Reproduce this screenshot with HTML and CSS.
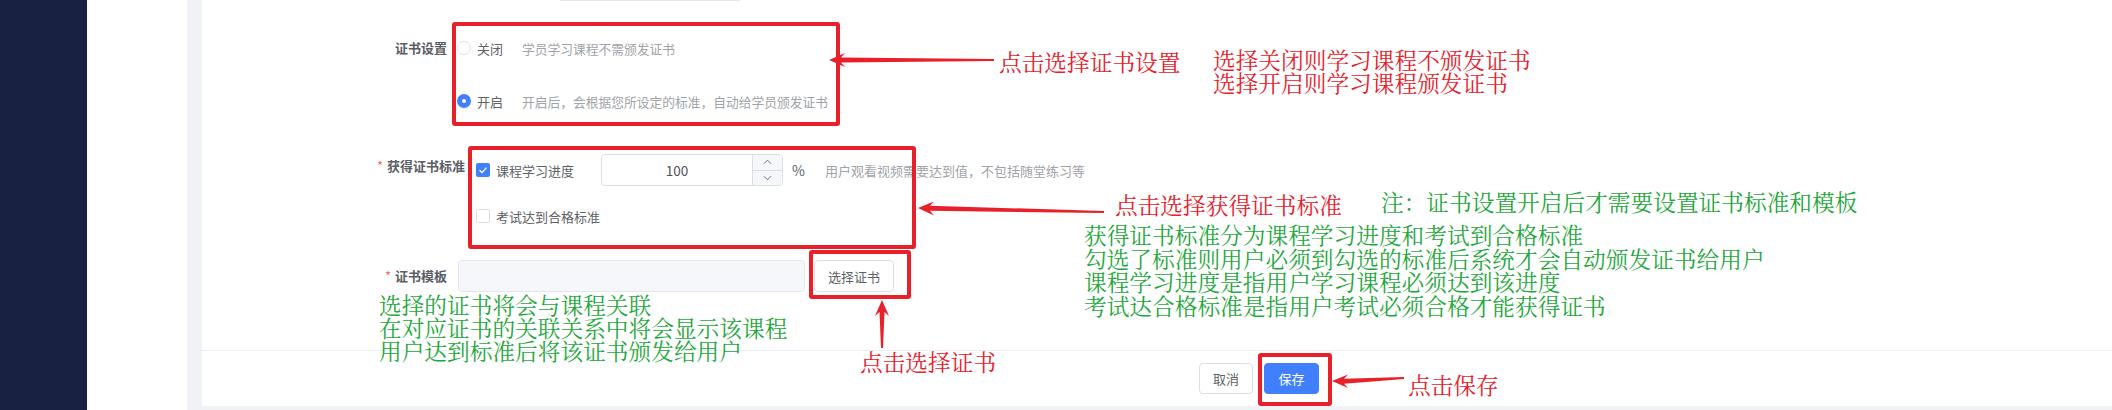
FILE: index.html
```html
<!DOCTYPE html>
<html lang="zh-CN">
<head>
    <meta charset="UTF-8">
    <title>证书设置</title>
    <link rel="stylesheet" href="styles.css">
</head>
<body>

<div class="layout">
    <aside class="sidebar"></aside>
    <div class="side-space"></div>

    <main class="main">
        <div class="card">
            <div class="card-body">
                <div class="prev-field"></div>

                <!-- 证书设置 -->
                <div class="form-item item-setting">
                    <label class="form-label">证书设置</label>
                    <div class="radio-group">
                        <div class="radio">
                            <span class="radio-dot"></span>
                            <span class="radio-text">关闭</span>
                            <span class="radio-desc">学员学习课程不需颁发证书</span>
                        </div>
                        <div class="radio">
                            <span class="radio-dot checked"></span>
                            <span class="radio-text">开启</span>
                            <span class="radio-desc">开启后，会根据您所设定的标准，自动给学员颁发证书</span>
                        </div>
                    </div>
                </div>

                <!-- 获得证书标准 -->
                <div class="form-item item-standard">
                    <label class="form-label wide"><span class="required">*</span>获得证书标准</label>
                    <div class="check-group">
                        <div class="check-row">
                            <span class="checkbox checked">
                                <svg viewBox="0 0 14 14" width="14" height="14"><path d="M3.5 7.2 L6 9.6 L10.6 4.6" fill="none" stroke="#fff" stroke-width="1.4"/></svg>
                            </span>
                            <span class="check-text">课程学习进度</span>
                            <div class="number-input">
                                <span class="number-value">100</span>
                                <div class="number-spin">
                                    <span class="spin-btn">
                                        <svg viewBox="0 0 10 6" width="9" height="6"><path d="M1 5 L5 1 L9 5" fill="none" stroke="#606266" stroke-width="1"/></svg>
                                    </span>
                                    <span class="spin-btn">
                                        <svg viewBox="0 0 10 6" width="9" height="6"><path d="M1 1 L5 5 L9 1" fill="none" stroke="#606266" stroke-width="1"/></svg>
                                    </span>
                                </div>
                            </div>
                            <span class="unit">%</span>
                            <span class="hint">用户观看视频需要达到值，不包括随堂练习等</span>
                        </div>
                        <div class="check-row">
                            <span class="checkbox"></span>
                            <span class="check-text">考试达到合格标准</span>
                        </div>
                    </div>
                </div>

                <!-- 证书模板 -->
                <div class="form-item item-template">
                    <label class="form-label"><span class="required">*</span>证书模板</label>
                    <div class="template-input"></div>
                    <button class="btn btn-plain btn-choose">选择证书</button>
                </div>
            </div>

            <div class="card-footer">
                <button class="btn btn-plain">取消</button>
                <button class="btn btn-primary">保存</button>
            </div>
        </div>
    </main>
</div>

<!-- annotations drawn over the screenshot -->
<div class="mark mark-setting"></div>
<div class="mark mark-standard"></div>
<div class="mark mark-choose"></div>
<div class="mark mark-save"></div>

<svg class="arrows" width="2112" height="410" viewBox="0 0 2112 410">
    <polygon points="829,60 845,53 841,57.5 994,59 994,61 841,62.5 845,67"/>
    <polygon points="918,208 934,201.5 930,205.8 1104,211 1104,213 930,210.8 934,215.5"/>
    <polygon points="882,300 875,316 879.5,312 881,348 883,348 884.5,312 889,316"/>
    <polygon points="1332,381 1348,374.5 1344,378.8 1404,377 1404,379 1344,383.8 1348,388"/>
</svg>

<div class="note red note-setting">点击选择证书设置</div>
<div class="note red note-setting-desc">选择关闭则学习课程不颁发证书<br>选择开启则学习课程颁发证书</div>
<div class="note red note-standard">点击选择获得证书标准</div>
<div class="note green note-tip">注：证书设置开启后才需要设置证书标准和模板</div>
<div class="note green note-standard-desc">获得证书标准分为课程学习进度和考试到合格标准<br>勾选了标准则用户必须到勾选的标准后系统才会自动颁发证书给用户<br>课程学习进度是指用户学习课程必须达到该进度<br>考试达合格标准是指用户考试必须合格才能获得证书</div>
<div class="note green note-template">选择的证书将会与课程关联<br>在对应证书的关联关系中将会显示该课程<br>用户达到标准后将该证书颁发给用户</div>
<div class="note red note-choose">点击选择证书</div>
<div class="note red note-save">点击保存</div>

</body>
</html>
```

FILE: styles.css
```css
body {
    margin: 0;
    font-family: "Noto Sans CJK SC", "Liberation Sans", sans-serif;
    font-size: 13px;
    color: #606266;
    background: #fff;
    overflow: hidden;
}
.layout {
    display: flex;
    height: 410px;
}
.sidebar {
    width: 87px;
    background-color: #182141;
}
.side-space {
    width: 100px;
    background-color: #fff;
}
.main {
    flex: 1;
    background-color: #f0f2f5;
    padding: 0 0 4px 15px;
}
.card {
    height: 406px;
    background-color: #fff;
    display: flex;
    flex-direction: column;
}
.card-body {
    flex: 1;
}
.prev-field {
    width: 180px;
    height: 1px;
    margin-left: 358px;
    background-color: #e4e7ed;
}

/* form rows */
.form-item {
    display: flex;
    align-items: flex-start;
}
.item-setting {
    margin-top: 37px;
}
.item-standard {
    margin-top: 43px;
}
.item-template {
    margin-top: 34px;
    align-items: center;
}
.form-label {
    width: 245px;
    margin-right: 10px;
    text-align: right;
    font-weight: 700;
    color: #5a5e66;
    line-height: 20px;
    flex-shrink: 0;
}
.form-label.wide {
    width: 263px;
    margin-right: 11px;
    line-height: 24px;
}
.item-template .form-label {
    margin-right: 11px;
    line-height: 32px;
}
.required {
    color: #f56c6c;
    font-weight: 400;
    margin-right: 4px;
}

/* radios */
.radio-group {
    display: flex;
    flex-direction: column;
    gap: 33px;
}
.radio {
    display: flex;
    align-items: center;
    height: 20px;
}
.radio-dot {
    width: 14px;
    height: 14px;
    box-sizing: border-box;
    border: 1px solid #dcdfe6;
    border-radius: 50%;
    background: #fff;
}
.radio-dot.checked {
    border: 5px solid #4080ff;
    background: #fff;
}
.radio-text {
    margin-left: 6px;
    color: #606266;
}
.radio-desc {
    margin-left: 19px;
    font-size: 12.75px;
    color: #a0a3a8;
}

/* checkboxes */
.check-group {
    display: flex;
    flex-direction: column;
    gap: 20px;
}
.check-row {
    display: flex;
    align-items: center;
    min-height: 20px;
}
.checkbox {
    width: 14px;
    height: 14px;
    box-sizing: border-box;
    border: 1px solid #dcdfe6;
    border-radius: 2px;
    background: #fff;
    display: flex;
}
.checkbox.checked {
    border: none;
    background: #4080ff;
}
.check-text {
    margin-left: 6px;
}
.number-input {
    width: 182px;
    height: 32px;
    margin-left: 27px;
    box-sizing: border-box;
    border: 1px solid #dcdfe6;
    border-radius: 4px;
    display: flex;
    overflow: hidden;
}
.number-value {
    flex: 1;
    text-align: center;
    line-height: 30px;
    font-size: 13.5px;
    color: #505257;
}
.number-spin {
    width: 29px;
    border-left: 1px solid #dcdfe6;
    background: #f5f7fa;
    display: flex;
    flex-direction: column;
}
.spin-btn {
    flex: 1;
    display: flex;
    align-items: center;
    justify-content: center;
}
.spin-btn + .spin-btn {
    border-top: 1px solid #dcdfe6;
}
.unit {
    margin-left: 9px;
    font-size: 14px;
}
.hint {
    margin-left: 20px;
    color: #a0a3a8;
}

/* template */
.template-input {
    width: 347px;
    height: 32px;
    box-sizing: border-box;
    border: 1px solid #e4e7ed;
    border-radius: 4px;
    background: #f5f7fa;
}
.btn {
    font-family: inherit;
    font-size: 13px;
    height: 31px;
    padding: 0 14px;
    border-radius: 4px;
    cursor: pointer;
}
.btn-plain {
    background: #fff;
    color: #606266;
    border: 1px solid #dcdfe6;
}
.btn-choose {
    width: 80px;
    height: 32px;
    margin-left: 9px;
    padding: 0;
}
.btn-primary {
    background: #4080ff;
    color: #fff;
    border: 1px solid #4080ff;
    margin-left: 11px;
    width: 55px;
    padding: 0;
}
.card-footer {
    height: 56px;
    box-sizing: border-box;
    border-top: 1px solid #ebeef5;
    padding: 12px 0 0 997px;
    display: flex;
    align-items: flex-start;
}
.card-footer .btn-plain {
    width: 54px;
    padding: 0;
}

/* annotations */
.mark {
    position: absolute;
    box-sizing: border-box;
    border: 4px solid #e8202a;
    border-radius: 3px;
}
.mark-setting {
    left: 452px;
    top: 22px;
    width: 388px;
    height: 104px;
}
.mark-standard {
    left: 468px;
    top: 146px;
    width: 448px;
    height: 103px;
}
.mark-choose {
    left: 809px;
    top: 250px;
    width: 102px;
    height: 49px;
}
.mark-save {
    left: 1258px;
    top: 353px;
    width: 74px;
    height: 53px;
}
.arrows {
    position: absolute;
    left: 0;
    top: 0;
    fill: #e8202a;
    pointer-events: none;
}
.note {
    position: absolute;
    font-family: "Noto Serif CJK SC", "Noto Sans CJK SC", serif;
    font-size: 22.7px;
    line-height: 23px;
    white-space: nowrap;
}
.note.red {
    color: #e8202a;
}
.note.green {
    color: #1fa83c;
}
.note-setting {
    left: 999px;
    top: 50px;
}
.note-setting-desc {
    left: 1213px;
    top: 48px;
}
.note-standard {
    left: 1115px;
    top: 193px;
}
.note-tip {
    left: 1381px;
    top: 190px;
}
.note-standard-desc {
    left: 1084px;
    top: 223px;
    line-height: 23.5px;
}
.note-template {
    left: 379px;
    top: 293px;
}
.note-choose {
    left: 860px;
    top: 350px;
}
.note-save {
    left: 1408px;
    top: 373px;
}
```
